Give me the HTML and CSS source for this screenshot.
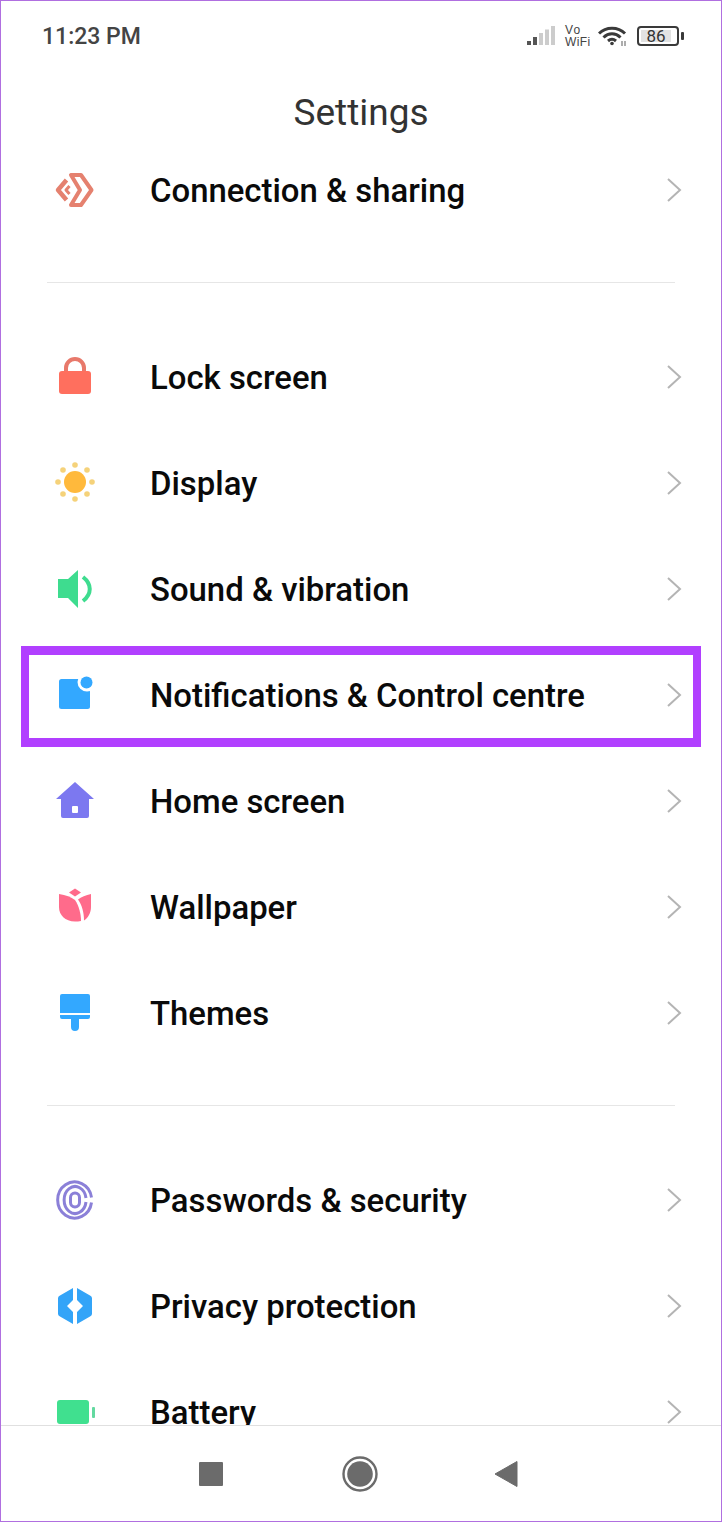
FILE: index.html
```html
<!DOCTYPE html>
<html lang="en">
<head>
<meta charset="utf-8">
<title>Settings</title>
<link rel="stylesheet" href="styles.css">
</head>
<body>
<div class="phone">
  <div class="status">
    <span class="time">11:23 PM</span>
    <div class="status-icons">
      <svg class="signal" width="28" height="20" viewBox="0 0 28 20"><rect x="0" y="15" width="4" height="4" fill="#555"/><rect x="6" y="11" width="4" height="8" fill="#555"/><rect x="12" y="7" width="4" height="12" fill="#ccc"/><rect x="18" y="3.500" width="4" height="15.500" fill="#ccc"/><rect x="24" y="0" width="4" height="19" fill="#ccc"/></svg>
      <span class="vowifi"><span class="vo">Vo</span><span class="wf">WiFi</span></span>
      <svg class="wifi" width="30" height="20" viewBox="0 0 30 20" fill="none" stroke="#3a3a3a" stroke-width="3"><path d="M1 7.500C8 .5 20 .5 27 7.500"/><path d="M5.500 11.500C10.500 6.500 17.500 6.500 22.500 11.500"/><path d="M10 15C12.500 12.800 15.500 12.800 18 15"/><circle cx="14" cy="17.500" r="1.800" fill="#3a3a3a" stroke="none"/><path d="M24 15v5M27 15v5" stroke="#777" stroke-width="1.200"/></svg>
      <div class="battery"><span class="battery-body"><span class="battery-level">86</span></span><span class="battery-nub"></span></div>
    </div>
  </div>
  <h1 class="title">Settings</h1>
  <div class="list">
    <div class="row"><svg class="icon" viewBox="0 0 48 48" fill="none" stroke="#e5816f" stroke-width="4" stroke-linejoin="round"><path d="M21 9H31L41.500 24L31 39H21L30 24Z"/><path d="M16.500 14L8 24L16.500 34" stroke-width="4.500"/><path d="M19.500 20L16 24L19.500 28" stroke-width="3"/></svg><span class="label">Connection &amp; sharing</span><svg class="chev" viewBox="0 0 16 26"><path d="M2 2L14 13L2 24"/></svg></div>
    <hr class="divider">
    <div class="row"><svg class="icon" viewBox="0 0 48 48"><path d="M16 20V15a9 9 0 0 1 18 0v5" fill="none" stroke="#e8796b" stroke-width="4"/><rect x="9" y="18" width="32" height="23" rx="3" fill="#ff6f5e"/></svg><span class="label">Lock screen</span><svg class="chev" viewBox="0 0 16 26"><path d="M2 2L14 13L2 24"/></svg></div>
    <div class="row"><svg class="icon" viewBox="0 0 48 48"><circle cx="25" cy="23" r="11" fill="#ffb93c"/><g fill="#f5d27a"><circle cx="25" cy="6" r="2.800"/><circle cx="25" cy="40" r="2.800"/><circle cx="8" cy="23" r="2.800"/><circle cx="42" cy="23" r="2.800"/><circle cx="13" cy="11" r="2.800"/><circle cx="37" cy="11" r="2.800"/><circle cx="13" cy="35" r="2.800"/><circle cx="37" cy="35" r="2.800"/></g></svg><span class="label">Display</span><svg class="chev" viewBox="0 0 16 26"><path d="M2 2L14 13L2 24"/></svg></div>
    <div class="row"><svg class="icon" viewBox="0 0 48 48"><path d="M8 14H18L28 5V43L18 33H8Z" fill="#3edc8f"/><path d="M33 12C42 19 42 29 33 36" fill="none" stroke="#3edc8f" stroke-width="4"/></svg><span class="label">Sound &amp; vibration</span><svg class="chev" viewBox="0 0 16 26"><path d="M2 2L14 13L2 24"/></svg></div>
    <div class="row"><svg class="icon" viewBox="0 0 48 48"><rect x="9" y="8" width="31" height="30" rx="2.500" fill="#33a8ff"/><circle cx="37" cy="11" r="9.500" fill="#fff"/><circle cx="36.500" cy="11.500" r="6" fill="#33a8ff"/></svg><span class="label">Notifications &amp; Control centre</span><svg class="chev" viewBox="0 0 16 26"><path d="M2 2L14 13L2 24"/></svg></div>
    <div class="row"><svg class="icon" viewBox="0 0 48 48"><path d="M25 5L44 22H39V39a2 2 0 0 1-2 2H13a2 2 0 0 1-2-2V22H6Z" fill="#7c78f0"/><rect x="22" y="29" width="6" height="7" rx="1" fill="#fff"/></svg><span class="label">Home screen</span><svg class="chev" viewBox="0 0 16 26"><path d="M2 2L14 13L2 24"/></svg></div>
    <div class="row"><svg class="icon" viewBox="0 0 48 48" fill="#ff6b8b"><path d="M25 5.500L31 9.500L25 13.500L19 9.500Z"/><path d="M9 11C16 12 21 14 25 17C29 23 31 31 31 38C29 38.500 27 38.500 25 38.500C15 38.500 9 32 9 24Z"/><path d="M41 11V24C41 30 38 35 34 37.500C34 30 32 22 28 16.500C31 14 36 12 41 11Z"/></svg><span class="label">Wallpaper</span><svg class="chev" viewBox="0 0 16 26"><path d="M2 2L14 13L2 24"/></svg></div>
    <div class="row"><svg class="icon" viewBox="0 0 48 48" fill="#33a8ff"><path d="M12 5H38a2 2 0 0 1 2 2V24H10V7a2 2 0 0 1 2-2Z"/><path d="M10 26H40V28a2 2 0 0 1-2 2H29V38a4 4 0 0 1-8 0V30H12a2 2 0 0 1-2-2Z"/></svg><span class="label">Themes</span><svg class="chev" viewBox="0 0 16 26"><path d="M2 2L14 13L2 24"/></svg></div>
    <hr class="divider">
    <div class="row"><svg class="icon" viewBox="0 0 48 48" fill="none" stroke="#8b80d8" stroke-width="3"><path d="M41.500 21.500A17 18 0 1 0 41.500 26.500"/><path d="M36 22A11 13.500 0 1 0 36 26"/><rect x="20.500" y="17" width="9" height="14" rx="4.500"/></svg><span class="label">Passwords &amp; security</span><svg class="chev" viewBox="0 0 16 26"><path d="M2 2L14 13L2 24"/></svg></div>
    <div class="row"><svg class="icon" viewBox="0 0 48 48" fill="#33a4f8"><path d="M23 6V18L17 24L23 30V42L10 34.500A3 3 0 0 1 8 32V16A3 3 0 0 1 10 13.500Z"/><path d="M27 6L40 13.500A3 3 0 0 1 42 16V32A3 3 0 0 1 40 34.500L27 42V30L33 24L27 18Z"/></svg><span class="label">Privacy protection</span><svg class="chev" viewBox="0 0 16 26"><path d="M2 2L14 13L2 24"/></svg></div>
    <div class="row"><svg class="icon" viewBox="0 0 48 48" fill="#40e08f"><rect x="7" y="12" width="32" height="24" rx="3"/><rect x="42" y="19" width="3" height="11" rx="1" fill="#63d9a0"/></svg><span class="label">Battery</span><svg class="chev" viewBox="0 0 16 26"><path d="M2 2L14 13L2 24"/></svg></div>
  </div>
  <div class="nav">
    <span class="nav-square"></span>
    <svg class="nav-home" width="36" height="36" viewBox="0 0 36 36"><circle cx="18" cy="18" r="16.500" fill="none" stroke="#6b6b6b" stroke-width="2.400"/><circle cx="18" cy="18" r="12.800" fill="#6b6b6b"/></svg>
    <svg class="nav-back" width="24" height="26" viewBox="0 0 24 26"><path d="M23 0.500V25.500L1 13Z" fill="#6b6b6b" stroke="#6b6b6b" stroke-linejoin="round"/></svg>
  </div>
  <div class="highlight"></div>
</div>
</body>
</html>
```
FILE: styles.css
```css
* { box-sizing: border-box; }
html, body { margin: 0; padding: 0; background: #fff; }
.phone {
  position: relative;
  width: 722px;
  height: 1522px;
  border: 1px solid #b06fe0;
  display: flex;
  flex-direction: column;
  overflow: hidden;
  font-family: Roboto, "Liberation Sans", sans-serif;
  background: #fff;
}
.status {
  height: 70px;
  flex: none;
  display: flex;
  align-items: center;
  justify-content: space-between;
  padding: 0 37px 0 41px;
}
.time { font-size: 23px; font-weight: 500; color: #444; }
.status-icons { display: flex; align-items: center; }
.signal { margin-right: 10px; }
.vowifi {
  display: flex;
  flex-direction: column;
  font-family: "Liberation Sans", sans-serif;
  font-size: 12px;
  line-height: 12px;
  color: #444;
  width: 33px;
}
.vo { letter-spacing: 1.200px; }
.wf { letter-spacing: 0.400px; }
.wifi { margin-right: 9px; }
.battery { display: flex; align-items: center; }
.battery-body {
  width: 42px;
  height: 20px;
  border: 2px solid #3a3a3a;
  border-radius: 4px;
  padding: 2px;
  display: flex;
}
.battery-level {
  flex: none;
  width: 30px;
  background: #e2e2e2;
  font-size: 17px;
  line-height: 12px;
  color: #333;
  text-align: center;
}
.battery-nub { width: 3px; height: 8px; background: #3a3a3a; margin-left: 2px; border-radius: 1px; }
.title {
  margin: 17px 0 0;
  flex: none;
  height: 49px;
  line-height: 49px;
  text-align: center;
  font-size: 37px;
  font-weight: 400;
  color: #333;
}
.list { flex: 1; overflow: hidden; }
.row {
  height: 106px;
  display: flex;
  align-items: center;
  padding: 0 39px 0 49px;
}
.icon { width: 48px; height: 48px; flex: none; margin-right: 52px; }
.label { flex: 1; padding-top: 1px; font-size: 32.900px; font-weight: 500; color: #0a0a0a; white-space: nowrap; }
.chev { width: 16px; height: 26px; flex: none; fill: none; stroke: #b4b4b4; stroke-width: 2; }
.divider {
  height: 1px;
  border: 0;
  background: #e6e6e6;
  margin: 39px 46px 41px;
}
.nav {
  height: 96px;
  flex: none;
  border-top: 1px solid #e0e0e0;
  display: flex;
  align-items: center;
  padding: 0 0 0 198px;
}
.nav-square { width: 24px; height: 24px; background: #6b6b6b; border-radius: 1px; margin-right: 119px; }
.nav-home { margin-right: 116px; }
.highlight {
  position: absolute;
  left: 20px;
  top: 645px;
  width: 680px;
  height: 101px;
  border-style: solid;
  border-color: #b13fff;
  border-width: 9px 8px;
}
```
